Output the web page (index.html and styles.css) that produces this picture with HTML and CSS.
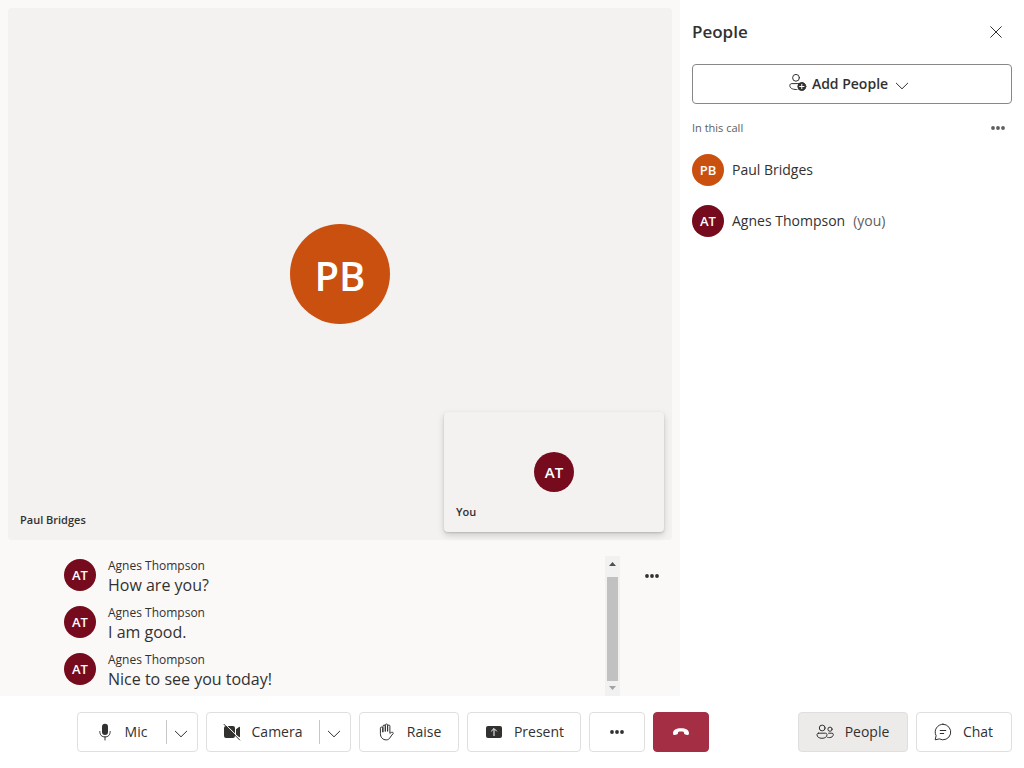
FILE: index.html
```html
<!DOCTYPE html>
<html lang="en">
<head>
<meta charset="utf-8">
<meta name="viewport" content="width=device-width, initial-scale=1">
<title>Call</title>
<link rel="stylesheet" href="styles.css">
</head>
<body>
<div class="call">
  <div class="content">
    <main class="media">
      <section class="stage" aria-label="Video gallery">
        <span class="avatar avatar-large orange">PB</span>
        <span class="tile-name">Paul Bridges</span>
        <div class="self-tile">
          <span class="avatar avatar-medium maroon">AT</span>
          <span class="tile-name">You</span>
        </div>
      </section>
      <section class="captions" aria-label="Captions">
        <div class="caption-area">
          <div class="caption-scroll">
            <ul class="caption-list">
              <li class="caption"><span class="avatar maroon">AT</span><div><div class="speaker">Agnes Thompson</div><div class="line">How are you?</div></div></li>
              <li class="caption"><span class="avatar maroon">AT</span><div><div class="speaker">Agnes Thompson</div><div class="line">I am good.</div></div></li>
              <li class="caption"><span class="avatar maroon">AT</span><div><div class="speaker">Agnes Thompson</div><div class="line">Nice to see you today!</div></div></li>
            </ul>
          </div>
          <div class="scrollbar" aria-hidden="true">
            <svg class="arrow" viewBox="0 0 15 15"><path d="M4 10l3.500-4 3.500 4z"/></svg>
            <div class="track"><div class="thumb"></div></div>
            <svg class="arrow disabled" viewBox="0 0 15 15"><path d="M4 5l3.500 4L11 5z"/></svg>
          </div>
        </div>
        <button class="icon-button" aria-label="Caption options">
          <svg class="icon" viewBox="0 0 20 20"><circle cx="5" cy="10" r="1.9"/><circle cx="10" cy="10" r="1.9"/><circle cx="15" cy="10" r="1.9"/></svg>
        </button>
      </section>
    </main>
    <aside class="panel" aria-label="People">
      <header class="panel-header">
        <h2>People</h2>
        <button class="icon-button" aria-label="Close">
          <svg class="icon stroke" viewBox="0 0 20 20"><path d="M4.7 4.7l10.6 10.6M15.3 4.7L4.7 15.3"/></svg>
        </button>
      </header>
      <button class="add-people">
        <svg class="icon stroke" viewBox="0 0 20 20"><circle cx="8" cy="3.800" r="3.400"/><path d="M9 15.500h-.5C4.300 15.500 1.800 14 1.800 11.600c0-1.200.8-2 2-2h7"/><circle class="solid" cx="13.800" cy="12.500" r="4"/><path class="light" d="M13.800 10.300v4.400M11.600 12.500H16"/></svg>
        <span>Add People</span>
        <svg class="icon stroke chevron" viewBox="0 0 20 20"><path d="M4.300 7.200L10 12.800l5.700-5.600"/></svg>
      </button>
      <div class="list-heading">
        <span>In this call</span>
        <button class="icon-button" aria-label="More options">
          <svg class="icon" viewBox="0 0 20 20"><circle cx="5" cy="10" r="1.900"/><circle cx="10" cy="10" r="1.900"/><circle cx="15" cy="10" r="1.900"/></svg>
        </button>
      </div>
      <ul class="people">
        <li><span class="avatar orange">PB</span><span>Paul Bridges</span></li>
        <li><span class="avatar maroon">AT</span><span>Agnes Thompson</span><span class="you">(you)</span></li>
      </ul>
    </aside>
  </div>
  <footer class="bar">
    <div class="controls">
      <div class="split">
        <button class="split-main mic">
          <svg class="icon" viewBox="0 0 20 20"><rect x="7" y="1.800" width="6" height="11.200" rx="3"/><path class="line-only" d="M4.800 9.500c0 3.600 2 5.400 5.200 5.400s5.200-1.800 5.200-5.400M10 15v3"/></svg>
          <span>Mic</span>
        </button>
        <button class="split-menu" aria-label="Mic options"><svg class="icon stroke chevron" viewBox="0 0 20 20"><path d="M4.300 7.200L10 12.800l5.700-5.600"/></svg></button>
      </div>
      <div class="split">
        <button class="split-main camera">
          <svg class="icon" viewBox="0 0 20 20"><path d="M4 4h7a2 2 0 0 1 2 2v8a2 2 0 0 1-2 2H4a2 2 0 0 1-2-2V6a2 2 0 0 1 2-2zM14 7.300l3-2.300c.5-.400 1-.200 1 .400v9.200c0 .600-.500.800-1 .400l-3-2.300z"/><path class="gap" d="M2.800 1.700l15.800 15.800"/><path class="line-only" d="M2 2.300l15.700 15.700"/></svg>
          <span>Camera</span>
        </button>
        <button class="split-menu" aria-label="Camera options"><svg class="icon stroke chevron" viewBox="0 0 20 20"><path d="M4.300 7.200L10 12.800l5.700-5.600"/></svg></button>
      </div>
      <button class="control raise">
        <svg class="icon stroke" viewBox="0 0 20 20"><path d="M6 9.800V4.200a1.150 1.150 0 0 1 2.300 0v5M8.300 9V3.200a1.150 1.150 0 0 1 2.300 0V9M10.600 9V4.200a1.150 1.150 0 0 1 2.300 0v7.300c.900-1.200 2.400-1.600 3.200-.900.400.400.200.800-.1 1.100-1.600 1.300-2.100 3.100-3.400 4.600-.9 1.100-1.900 1.600-3.300 1.600-3.400 0-5.900-2.400-5.900-6.300V6.200a1.150 1.150 0 0 1 2.300 0v3.600"/></svg>
        <span>Raise</span>
      </button>
      <button class="control present">
        <svg class="icon" viewBox="0 0 20 20"><rect x="2" y="4" width="16" height="12" rx="2"/><path class="light" d="M10 14V6.800M7.200 9.300L10 6.500l2.800 2.800"/></svg>
        <span>Present</span>
      </button>
      <button class="control compact" aria-label="More">
        <svg class="icon" viewBox="0 0 20 20"><circle cx="5" cy="10" r="1.900"/><circle cx="10" cy="10" r="1.900"/><circle cx="15" cy="10" r="1.900"/></svg>
      </button>
      <button class="control compact leave" aria-label="Leave">
        <svg class="icon" viewBox="0 0 20 20"><path d="M10 6.200c4.800 0 8.200 1.900 8 5-.1 1.300-.6 1.900-1.700 1.700l-2-.400c-.900-.200-1.200-.600-1.300-1.400l-.2-1.200c-1.800-.600-3.800-.600-5.600 0L7 11.100c-.1.800-.4 1.200-1.300 1.400l-2 .400c-1.100.2-1.600-.400-1.700-1.700-.2-3.100 3.200-5 8-5z"/></svg>
      </button>
    </div>
    <div class="side-controls">
      <button class="control people-button" aria-pressed="true">
        <svg class="icon stroke" viewBox="0 0 20 20"><circle cx="7.200" cy="6" r="2.900"/><circle cx="15" cy="7.200" r="2.100"/><path d="M3.500 11.200h7c.9 0 1.500.6 1.500 1.400 0 2.300-1.800 3.700-5 3.700s-5-1.400-5-3.700c0-.800.600-1.400 1.500-1.400zM13.600 11.200h3.300c.9 0 1.400.5 1.400 1.200 0 1.900-1.500 3.200-4 3.200-.6 0-1.100-.1-1.600-.2"/></svg>
        <span>People</span>
      </button>
      <button class="control chat">
        <svg class="icon stroke" viewBox="0 0 20 20"><path d="M10 2.200a7.800 7.800 0 1 1-3.700 14.700L2.200 17.800l.9-4.100A7.800 7.800 0 0 1 10 2.200zM7.200 8.500h5.600M7.200 11.500h3.500"/></svg>
        <span>Chat</span>
      </button>
    </div>
  </footer>
</div>
</body>
</html>
```
FILE: styles.css
```css
* { box-sizing: border-box; }

body {
  margin: 0;
  font: 14px/20px "Segoe UI", "Open Sans", "Noto Sans", sans-serif;
  color: #323130;
  background: #fff;
}

ul, h2 { margin: 0; padding: 0; }
ul { list-style: none; }

button {
  margin: 0;
  padding: 0;
  border: 0;
  background: none;
  color: inherit;
  font: inherit;
  cursor: pointer;
}

.call { display: flex; flex-direction: column; height: 100vh; }
.content { display: flex; flex: 1; min-height: 0; }

.media {
  display: flex;
  flex: 1;
  flex-direction: column;
  min-width: 0;
  background: #faf9f8;
}

.stage {
  position: relative;
  display: flex;
  flex: 1;
  align-items: center;
  justify-content: center;
  margin: 8px 8px 0;
  border-radius: 4px;
  background: #f3f2f1;
}

.avatar {
  display: flex;
  flex: none;
  align-items: center;
  justify-content: center;
  width: 32px;
  height: 32px;
  border-radius: 50%;
  color: #fff;
  font-size: 13px;
  font-weight: 600;
}
.avatar-medium { width: 40px; height: 40px; font-size: 15px; }
.avatar-large { width: 100px; height: 100px; padding-top: 4px; font-size: 40px; }
.orange { background: #ca5010; }
.maroon { background: #750b1c; }

.tile-name {
  position: absolute;
  bottom: 12px;
  left: 12px;
  font-size: 11px;
  line-height: 16px;
  font-weight: 600;
}

.self-tile {
  position: absolute;
  right: 8px;
  bottom: 8px;
  display: flex;
  align-items: center;
  justify-content: center;
  width: 220px;
  height: 120px;
  border-radius: 4px;
  background: #f3f2f1;
  box-shadow: 0 1px 2px rgba(0, 0, 0, .14), 0 3px 7px rgba(0, 0, 0, .16);
}

.captions { display: flex; gap: 22px; padding: 16px 18px 0 60px; }
.caption-area { display: flex; flex: 1; height: 140px; }
.caption-scroll {
  display: flex;
  flex: 1;
  flex-direction: column-reverse;
  overflow-y: auto;
  scrollbar-width: none;
}
.caption-list {
  display: flex;
  flex: none;
  flex-direction: column;
  gap: 8px;
  padding: 9px 4px 5px;
}
.caption { display: flex; gap: 12px; height: 39px; }
.caption .avatar { margin-top: 1px; }
.speaker { font-size: 12px; line-height: 16px; }
.line { font-size: 16px; line-height: 22px; }

.scrollbar { display: flex; flex-direction: column; width: 15px; background: #f1f1f1; }
.arrow { display: block; width: 15px; height: 15px; fill: #505050; }
.arrow.disabled { fill: #a3a3a3; }
.track { display: flex; flex: 1; align-items: flex-end; padding: 0 2px; }
.thumb { width: 100%; height: 95%; background: #c1c1c1; }

.icon { display: block; flex: none; width: 20px; height: 20px; fill: currentColor; }
.stroke, .line-only { fill: none; stroke: currentColor; stroke-width: 1; stroke-linecap: round; stroke-linejoin: round; }
.solid { fill: currentColor; }
.light { fill: none; stroke: #fff; stroke-width: 1; }
.gap { fill: none; stroke: #fff; stroke-width: 1; }

.icon-button {
  display: flex;
  align-items: center;
  justify-content: center;
  width: 20px;
  height: 40px;
}

.panel { flex: none; width: 344px; padding: 12px; }
.panel-header { display: flex; align-items: center; justify-content: space-between; padding-right: 6px; }
.panel-header h2 { font-size: 17px; line-height: 24px; font-weight: 600; }

.add-people {
  display: flex;
  align-items: center;
  justify-content: center;
  gap: 4px;
  width: 100%;
  height: 40px;
  margin-top: 12px;
  padding-right: 4px;
  border: 1px solid #8a8886;
  border-radius: 4px;
  font-weight: 600;
}
.chevron { margin-top: 4px; }

.list-heading {
  display: flex;
  align-items: center;
  justify-content: space-between;
  height: 48px;
  padding-right: 4px;
  color: #605e5c;
  font-size: 11px;
}

.people li { display: flex; align-items: center; gap: 8px; height: 36px; margin-bottom: 15px; }
.you { color: #605e5c; }

.bar { display: flex; gap: 24px; align-items: center; padding: 16px 12px; }
.controls, .side-controls { display: flex; gap: 8px; }
.controls { flex: 1; justify-content: center; }

.control, .split { height: 40px; border: 1px solid #e1dfdd; border-radius: 4px; }
.control, .split-main, .split-menu { display: flex; align-items: center; justify-content: center; gap: 10px; }
.split { display: flex; align-items: center; }
.split-main { height: 38px; padding-right: 2px; }
.split-menu { width: 31px; height: 24px; padding-right: 2px; border-left: 1px solid #c8c6c4; }
.mic { width: 88px; }
.camera { width: 112px; }
.raise { width: 100px; }
.present { width: 114px; }
.compact { width: 56px; }
.leave { border-color: #a42e43; background: #a42e43; color: #fff; }
.people-button { width: 110px; padding-right: 2px; background: #edebe9; }
.chat { width: 96px; padding-right: 2px; }
```
